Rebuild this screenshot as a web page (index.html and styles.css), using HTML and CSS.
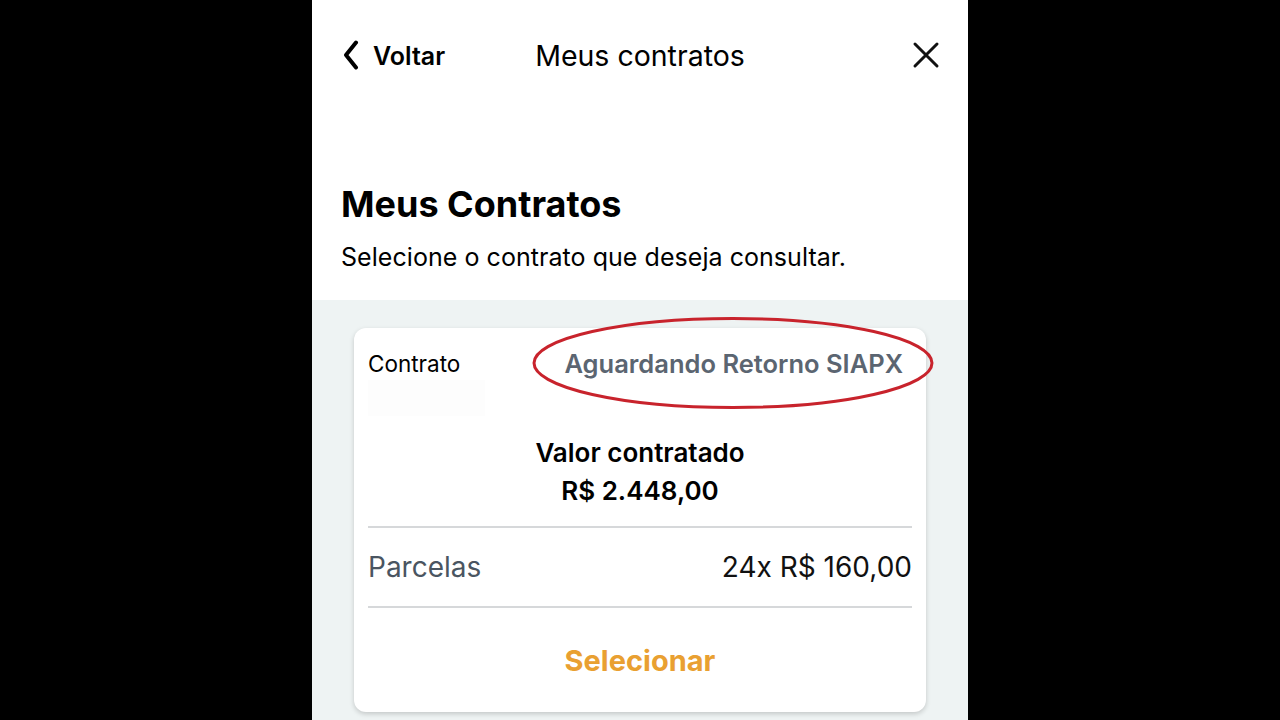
FILE: index.html
```html
<!DOCTYPE html>
<html lang="pt-BR">
<head>
<meta charset="utf-8">
<title>Meus contratos</title>
<link rel="stylesheet" href="styles.css">
</head>
<body>
<div class="phone">
  <header class="nav">
    <button class="nav-back">
      <svg class="chev" width="18" height="30" viewBox="0 0 18 30"><path d="M14 2.5 L4 15 L14 27.5" fill="none" stroke="#000" stroke-width="4" stroke-linecap="round" stroke-linejoin="round"/></svg>
      <span>Voltar</span>
    </button>
    <h1 class="nav-title">Meus contratos</h1>
    <button class="nav-close">
      <svg width="28" height="28" viewBox="0 0 28 28"><path d="M3 3 L25 25 M25 3 L3 25" fill="none" stroke="#111" stroke-width="3" stroke-linecap="round"/></svg>
    </button>
  </header>
  <section class="intro">
    <h2 class="intro-title">Meus Contratos</h2>
    <p class="intro-text">Selecione o contrato que deseja consultar.</p>
  </section>
  <section class="list">
    <article class="card">
      <div class="card-top">
        <div class="card-head">
          <span class="label">Contrato</span>
          <span class="status">Aguardando Retorno SIAPX</span>
        </div>
        <div class="masked"></div>
        <div class="amount">
          <div class="amount-label">Valor contratado</div>
          <div class="amount-value">R$ 2.448,00</div>
        </div>
      </div>
      <div class="row">
        <span class="row-label">Parcelas</span>
        <span class="row-value">24x R$ 160,00</span>
      </div>
      <div class="action">Selecionar</div>
      <svg class="mark" width="404" height="95" viewBox="0 0 404 95"><ellipse cx="202" cy="47" rx="199" ry="44.5" fill="none" stroke="#c8232c" stroke-width="3"/></svg>
    </article>
  </section>
</div>
</body>
</html>
```
FILE: styles.css
```css
* { box-sizing: border-box; }
html, body { margin: 0; padding: 0; }
body {
  background: #000;
  display: flex;
  justify-content: center;
  height: 720px;
  overflow: hidden;
  font-family: "Inter", "Roboto", "Liberation Sans", sans-serif;
  color: #000;
}
.phone {
  width: 656px;
  height: 720px;
  background: #fff;
  display: flex;
  flex-direction: column;
}
.nav {
  height: 110px;
  display: flex;
  align-items: center;
  justify-content: space-between;
  padding: 0 28px 0 30px;
  position: relative;
}
.nav button {
  background: none;
  border: 0;
  padding: 0;
  font: inherit;
  color: #000;
  display: flex;
  align-items: center;
}
.nav-back span {
  font-size: 25px;
  font-weight: 600;
  margin-left: 13px;
  letter-spacing: 0;
  position: relative;
  top: 1px;
}
.nav-title {
  position: absolute;
  left: 0;
  right: 0;
  text-align: center;
  margin: 0;
  font-size: 28.5px;
  font-weight: 400;
  letter-spacing: 0;
  pointer-events: none;
}
.intro {
  padding: 69px 29px 0;
  height: 190px;
}
.intro-title {
  margin: 0;
  font-size: 36px;
  font-weight: 700;
  letter-spacing: 0;
  line-height: 50px;
}
.intro-text {
  margin: 11px 0 0;
  font-size: 25px;
  line-height: 34px;
  letter-spacing: 0.05px;
}
.list {
  flex: 1;
  background: #eef3f3;
  padding: 28px 42px 0;
}
.card {
  position: relative;
  background: #fff;
  border-radius: 12px;
  box-shadow: 0 2px 5px rgba(0,0,0,0.18);
  padding: 0 14px;
  height: 384px;
}
.card-top {
  padding-top: 20px;
  height: 200px;
  border-bottom: 2px solid #d6d8da;
}
.card-head {
  display: flex;
  justify-content: space-between;
  align-items: center;
  height: 30px;
}
.label {
  font-size: 22.5px;
}
.status {
  font-size: 25.5px;
  font-weight: 600;
  color: #5b6571;
  margin-right: 9px;
}
.masked {
  height: 36px;
  width: 117px;
  margin: 2px 0 18px;
  background: #fdfdfd;
}
.amount {
  text-align: center;
  font-weight: 600;
  font-size: 26px;
  line-height: 38px;
}
.row {
  height: 80px;
  display: flex;
  justify-content: space-between;
  align-items: center;
  border-bottom: 2px solid #d6d8da;
  font-size: 28px;
}
.row-label { color: #4a5561; }
.row-value { color: #111; }
.action {
  height: 104px;
  display: flex;
  align-items: center;
  justify-content: center;
  color: #e9a031;
  font-size: 29px;
  font-weight: 700;
}
.mark {
  position: absolute;
  left: 177px;
  top: -12px;
}
```
